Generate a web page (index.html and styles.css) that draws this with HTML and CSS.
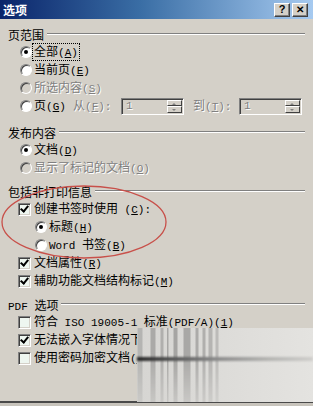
FILE: index.html
```html
<!DOCTYPE html>
<html lang="zh-CN">
<head>
  <meta charset="UTF-8">
  <title>选项</title>
  <link rel="stylesheet" href="styles.css">
</head>
<body>

  <div class="window">
    <div class="titlebar">
      <span class="title">选项</span>
      <div class="title-buttons">
        <span class="tbtn">?</span>
        <span class="tbtn tbtn-close">✕</span>
      </div>
    </div>

    <div class="content">
      <!-- 页范围 -->
      <div class="group g-range">
        <div class="legend"><span>页范围</span></div>
        <div class="row"><span class="radio checked"></span><span class="label focus">全部<span class="lat">(<u>A</u>)</span></span></div>
        <div class="row"><span class="radio"></span><span class="label">当前页<span class="lat">(<u>E</u>)</span></span></div>
        <div class="row disabled"><span class="radio"></span><span class="label">所选内容<span class="lat">(<u>S</u>)</span></span></div>
        <div class="row pages">
          <span class="radio"></span>
          <span class="label page-label">页<span class="lat">(<u>G</u>)</span></span>
          <span class="label from-label dim">从<span class="lat">(<u>F</u>):</span></span>
          <span class="spin"><span class="spin-val">1</span><span class="spin-btns"><span class="sbtn up"></span><span class="sbtn down"></span></span></span>
          <span class="label to-label dim">到<span class="lat">(<u>T</u>):</span></span>
          <span class="spin"><span class="spin-val">1</span><span class="spin-btns"><span class="sbtn up"></span><span class="sbtn down"></span></span></span>
        </div>
      </div>

      <!-- 发布内容 -->
      <div class="group g-publish">
        <div class="legend"><span>发布内容</span></div>
        <div class="row"><span class="radio checked"></span><span class="label">文档<span class="lat">(<u>D</u>)</span></span></div>
        <div class="row disabled"><span class="radio"></span><span class="label">显示了标记的文档<span class="lat">(<u>O</u>)</span></span></div>
      </div>

      <!-- 包括非打印信息 -->
      <div class="group">
        <div class="legend"><span>包括非打印信息</span></div>
        <div class="row check-row"><span class="check checked"></span><span class="label">创建书签时使用<span class="lat"> (<u>C</u>):</span></span></div>
        <div class="row sub-row"><span class="radio checked"></span><span class="label">标题<span class="lat">(<u>H</u>)</span></span></div>
        <div class="row sub-row"><span class="radio"></span><span class="label"><span class="lat">Word </span>书签<span class="lat">(<u>B</u>)</span></span></div>
        <div class="row check-row"><span class="check checked"></span><span class="label">文档属性<span class="lat">(<u>R</u>)</span></span></div>
        <div class="row check-row"><span class="check checked"></span><span class="label">辅助功能文档结构标记<span class="lat">(<u>M</u>)</span></span></div>
      </div>

      <!-- PDF 选项 -->
      <div class="group">
        <div class="legend"><span><span class="lat">PDF </span>选项</span></div>
        <div class="row check-row"><span class="check"></span><span class="label">符合<span class="lat"> ISO 19005-1 </span>标准<span class="lat">(PDF/A)(<u>1</u>)</span></span></div>
        <div class="row check-row"><span class="check checked"></span><span class="label">无法嵌入字体情况下使用位图<span class="lat">(<u>F</u>)</span></span></div>
        <div class="row check-row"><span class="check"></span><span class="label">使用密码加密文档<span class="lat">(<u>N</u>)</span></span></div>
      </div>
    </div>

    <!-- 圈出的部分 -->
    <svg class="mark" width="313" height="406" viewBox="0 0 313 406">
      <ellipse cx="84" cy="222" rx="82" ry="36" fill="none" stroke="#c8504a" stroke-width="1.3"/>
    </svg>

    <!-- 右下角水印涂抹 -->
    <div class="smear">
      <div class="stripes"></div>
      <div class="streak"></div>
    </div>
  </div>

</body>
</html>
```

FILE: styles.css
```css
body {
  margin: 0;
  font-family: "Noto Sans CJK SC", sans-serif;
  font-size: 12px;
  color: #000;
  background-color: #d4d0c8;
}

.window {
  position: relative;
  width: 313px;
  height: 406px;
  overflow: hidden;
  background-color: #d4d0c8;
  box-shadow: inset 0 -3px #c8c4bc, inset 0 -5px #4a4a4a;
}

.titlebar {
  height: 19px;
  display: flex;
  align-items: center;
  justify-content: space-between;
  padding: 0 5px 0 3px;
  background: linear-gradient(to right, #0a246a, #3a6ea5 45%, #a6caf0);
}

.title {
  color: #fff;
  font-weight: bold;
  font-size: 12px;
  line-height: 19px;
}

.title-buttons {
  display: flex;
  gap: 2px;
}

.tbtn {
  width: 16px;
  height: 14px;
  box-sizing: border-box;
  display: flex;
  align-items: center;
  justify-content: center;
  background-color: #d4d0c8;
  border: 1px solid;
  border-color: #fff #404040 #404040 #fff;
  box-shadow: inset -1px -1px #808080;
  font-family: "Liberation Sans", sans-serif;
  font-weight: bold;
  font-size: 11px;
  line-height: 1;
}

.tbtn-close {
  font-size: 10px;
}

.content {
  padding: 7px 8px 0 8px;
}

.group {
  margin-top: 6px;
}

.g-range {
  margin-top: 0;
}

.g-publish {
  margin-top: 9px;
}

.legend {
  height: 16px;
  display: flex;
  align-items: center;
  margin-bottom: 1px;
}

.legend::after {
  content: "";
  flex: 1;
  margin-left: 3px;
  border-top: 1px solid #808080;
  border-bottom: 1px solid #fff;
}

.row {
  height: 18px;
  display: flex;
  align-items: center;
  padding-left: 12px;
}

.check-row {
  padding-left: 10px;
}

.sub-row {
  padding-left: 27px;
}

.label {
  white-space: nowrap;
  line-height: 14px;
}

.lat {
  font-family: "Liberation Mono", monospace;
  font-size: 11px;
}

.focus {
  outline: 1px dotted #000;
  outline-offset: 0;
  padding: 0 1px;
  margin-left: -1px;
}

.disabled .label,
.dim {
  color: #808080;
  text-shadow: 1px 1px 0 #fff;
}

/* 单选框 */
.radio {
  position: relative;
  flex: none;
  width: 12px;
  height: 12px;
  box-sizing: border-box;
  margin-right: 2px;
  border-radius: 50%;
  border: 1px solid;
  border-color: #808080 #fff #fff #808080;
  box-shadow: inset 1px 1px #404040;
  background-color: #fff;
}

.disabled .radio {
  background-color: #d4d0c8;
}

.radio.checked::after {
  content: "";
  position: absolute;
  left: 3px;
  top: 3px;
  width: 4px;
  height: 4px;
  border-radius: 50%;
  background-color: #000;
}

/* 复选框 */
.check {
  position: relative;
  flex: none;
  width: 13px;
  height: 13px;
  box-sizing: border-box;
  margin-right: 3px;
  border: 1px solid;
  border-color: #808080 #fff #fff #808080;
  box-shadow: inset 1px 1px #404040, inset -1px -1px #d4d0c8;
  background-color: #eef6f0;
}

.check.checked::after {
  content: "";
  position: absolute;
  left: 3px;
  top: 0px;
  width: 3px;
  height: 6px;
  border-right: 2px solid #000;
  border-bottom: 2px solid #000;
  transform: rotate(40deg);
}

/* 页码输入 */
.pages {
  margin-bottom: 3px;
}

.page-label {
  width: 39px;
}

.from-label {
  width: 48px;
}

.to-label {
  width: 46px;
  margin-left: 9px;
}

.spin {
  width: 63px;
  height: 17px;
  box-sizing: border-box;
  display: flex;
  align-items: stretch;
  background-color: #d4d0c8;
  border: 1px solid;
  border-color: #808080 #fff #fff #808080;
  box-shadow: inset 1px 1px #404040;
  padding: 1px 1px 1px 1px;
}

.spin-val {
  flex: 1;
  color: #808080;
  font-family: "Liberation Mono", monospace;
  font-size: 11px;
  line-height: 13px;
  padding-left: 3px;
  text-shadow: 1px 1px 0 #fff;
}

.spin-btns {
  width: 15px;
  display: flex;
  flex-direction: column;
}

.sbtn {
  position: relative;
  flex: 1;
  box-sizing: border-box;
  border: 1px solid;
  border-color: #fff #404040 #404040 #fff;
  background-color: #d4d0c8;
}

.sbtn::after {
  content: "";
  position: absolute;
  left: 4px;
  top: 2px;
  width: 0;
  height: 0;
  border-left: 2px solid transparent;
  border-right: 2px solid transparent;
}

.sbtn.up::after {
  border-bottom: 2px solid #808080;
}

.sbtn.down::after {
  border-top: 2px solid #808080;
}

/* 叠加层 */
.mark {
  position: absolute;
  left: 0;
  top: 0;
  pointer-events: none;
}

.smear {
  position: absolute;
  left: 137px;
  top: 328px;
  width: 176px;
  height: 74px;
  background: linear-gradient(to right, #d6d5d2, #dddcd9 50%, #e4e3e0);
}

.stripes {
  position: absolute;
  left: 0;
  top: 0;
  width: 92px;
  height: 74px;
  background: linear-gradient(to right,
    transparent 0, #b4b4b2 1px, #b4b4b2 5px, transparent 6px,
    transparent 13px, #aaa9a7 14px, #aaa9a7 18px, transparent 19px,
    transparent 23px, #b0afad 24px, #b0afad 26px, transparent 27px,
    transparent 30px, #a8a7a5 30px, #a8a7a5 31px, transparent 32px,
    transparent 36px, #a6a5a3 37px, #a6a5a3 40px, transparent 41px,
    transparent 46px, #a9a8a6 47px, #a9a8a6 53px, transparent 54px,
    transparent 58px, #acaba9 59px, #acaba9 61px, transparent 62px,
    transparent 65px, #b0afad 66px, #b0afad 68px, transparent 69px,
    transparent 71px, #b5b4b2 72px, #b5b4b2 75px, transparent 76px,
    transparent 78px, #bcbbb9 79px, #bcbbb9 81px, transparent 82px);
  -webkit-mask-image: linear-gradient(to bottom, #000 40%, rgba(0,0,0,0.35));
  mask-image: linear-gradient(to bottom, #000 40%, rgba(0,0,0,0.35));
  filter: blur(0.6px);
}

.streak {
  position: absolute;
  left: 0;
  top: 29px;
  width: 176px;
  height: 4px;
  background: linear-gradient(to right, #262626, #555 20%, #8a8a8a 45%, #b4b4b2 75%, #cfcecb);
  filter: blur(0.8px);
}
```
